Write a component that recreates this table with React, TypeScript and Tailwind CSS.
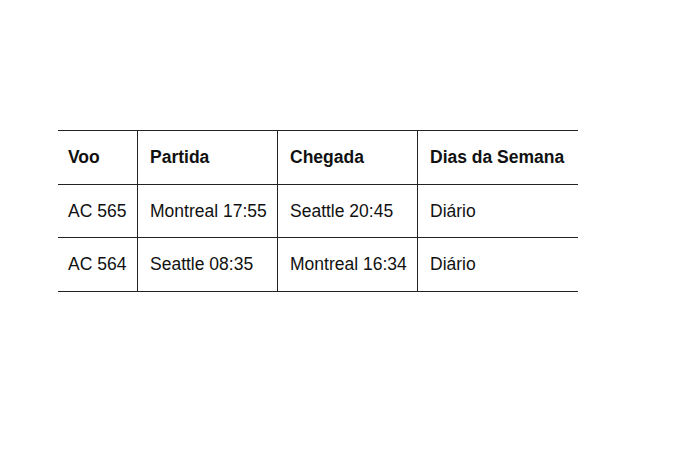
import React from "react";

const rows = [
  ["AC 565", "Montreal 17:55", "Seattle 20:45", "Diário"],
  ["AC 564", "Seattle 08:35", "Montreal 16:34", "Diário"],
];
const head = ["Voo", "Partida", "Chegada", "Dias da Semana"];
const heights = ["h-[54px]", "h-[53px]", "h-[54px]"];

export default function App() {
  return (
    <div className="w-[700px] h-[465px] bg-white pt-[130px] pl-[58px]" style={{ fontFamily: '"Liberation Sans", Arial, sans-serif' }}>
      <div className="w-[520px] border-t border-[#222] text-[17.5px] text-[#111]">
        {[head, ...rows].map((r, i) => (
          <div key={i} className={`grid grid-cols-[80px_140px_140px_160px] border-b border-[#222] ${heights[i]}`}>
            {r.map((c, j) => (
              <div
                key={j}
                className={`flex items-center ${j === 0 ? "pl-[10px]" : "pl-[12px]"} ${j < 3 ? "border-r border-[#222]" : ""} ${i === 0 ? "font-bold" : ""}`}
              >
                {c}
              </div>
            ))}
          </div>
        ))}
      </div>
    </div>
  );
}
